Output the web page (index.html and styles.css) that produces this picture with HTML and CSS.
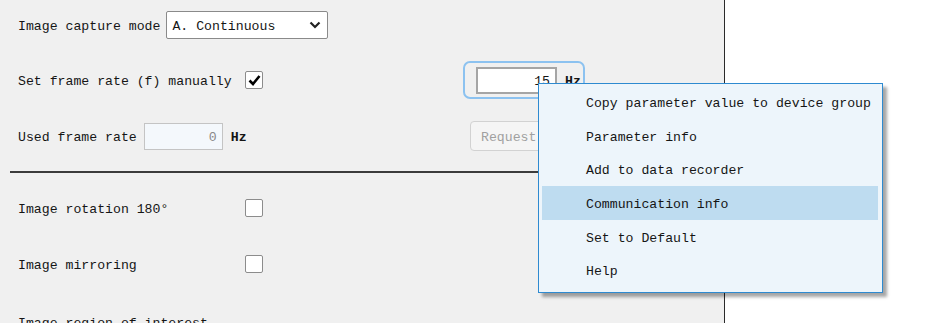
FILE: index.html
```html
<!DOCTYPE html>
<html lang="en">
<head>
<meta charset="UTF-8">
<title>Camera parameters</title>
<link rel="stylesheet" href="styles.css">
</head>
<body>
<div class="page">
  <div class="panel">
    <div class="row row-mode">
      <span class="label">Image capture mode</span>
      <div class="select">
        <span class="select-text">A. Continuous</span>
        <svg class="chevron" width="12" height="8" viewBox="0 0 12 8"><path d="M1.5 1.5 L6 6 L10.5 1.5" fill="none" stroke="#222" stroke-width="2.2"/></svg>
      </div>
    </div>

    <div class="row row-rate">
      <div class="left">
        <span class="label label-col">Set frame rate (f) manually</span>
        <span class="check checked">
          <svg width="15" height="15" viewBox="0 0 15 15"><path d="M2.5 7.5 L6 11 L12.5 3" fill="none" stroke="#000" stroke-width="2.6"/></svg>
        </span>
      </div>
      <div class="right">
        <div class="focus-box">
          <input class="num" type="text" value="15">
          <span class="unit">Hz</span>
        </div>
      </div>
    </div>

    <div class="row row-used">
      <div class="left">
        <span class="label">Used frame rate</span>
        <input class="num num-ro" type="text" value="0" readonly>
        <span class="unit">Hz</span>
      </div>
      <div class="right">
        <button class="btn" disabled>Request frame rate</button>
      </div>
    </div>

    <div class="divider"></div>

    <div class="row row-rot">
      <span class="label label-col">Image rotation 180°</span>
      <span class="check"></span>
    </div>

    <div class="row row-mirror">
      <span class="label label-col">Image mirroring</span>
      <span class="check"></span>
    </div>

    <div class="row row-roi">
      <span class="label">Image region of interest</span>
    </div>
  </div>

  <ul class="menu">
    <li>Copy parameter value to device group</li>
    <li>Parameter info</li>
    <li>Add to data recorder</li>
    <li class="active">Communication info</li>
    <li>Set to Default</li>
    <li>Help</li>
  </ul>
</div>
</body>
</html>
```
FILE: styles.css
```css
body {
    margin: 0;
    background: #fff;
    font-family: "Liberation Mono", "DejaVu Sans Mono", monospace;
    font-size: 13.2px;
    color: #151515;
    overflow: hidden;
}
.page {
    position: relative;
    height: 323px;
}
.panel {
    width: 724px;
    height: 323px;
    background: #f0f0f0;
    border-right: 1px solid #2a2a2a;
    overflow: hidden;
}
.row {
    display: flex;
    align-items: center;
    padding-left: 18px;
}
.row-mode { height: 50px; }
.row-rate { height: 60px; }
.row-used { height: 52px; }
.row-rot { height: 70px; }
.row-mirror { height: 42px; }
.row-roi { height: 74px; }

.left {
    display: flex;
    align-items: center;
    width: 445px;
}
.right {
    display: flex;
    align-items: center;
}
.label {
    padding-top: 2px;
    white-space: pre;
}
.label-col {
    width: 227px;
}

.select {
    display: flex;
    align-items: center;
    justify-content: space-between;
    box-sizing: border-box;
    width: 162px;
    height: 28px;
    margin-left: 6px;
    padding: 0 4px 0 5px;
    background: #fff;
    border: 1px solid #8a8a8a;
    border-radius: 2px;
}
.select-text {
    padding-top: 2px;
}
.chevron {
    margin-right: 2px;
}

.check {
    display: inline-flex;
    align-items: center;
    justify-content: center;
    box-sizing: border-box;
    width: 18px;
    height: 18px;
    background: #fff;
    border: 1px solid #8c8c8c;
    border-radius: 2px;
}

.focus-box {
    display: flex;
    align-items: center;
    box-sizing: border-box;
    width: 122px;
    height: 38px;
    padding-left: 11px;
    border: 2px solid #8cc2f0;
    border-radius: 7px;
}
.num {
    box-sizing: border-box;
    width: 81px;
    height: 27px;
    padding: 2px 5px 0;
    font: inherit;
    color: #151515;
    text-align: right;
    background: #fff;
    border: 2px solid #a5a5a5;
    outline: none;
}
.num-ro {
    width: 79px;
    margin-left: 7px;
    color: #8a8a8a;
    background: #f4f8fc;
    border: 1px solid #c4c4c4;
}
.unit {
    margin-left: 8px;
    padding-top: 2px;
    font-weight: bold;
}

.btn {
    box-sizing: border-box;
    width: 130px;
    height: 30px;
    margin-left: 7px;
    padding: 2px 10px 0;
    font: inherit;
    color: #a0a0a0;
    text-align: left;
    white-space: nowrap;
    overflow: hidden;
    background: #f5f5f5;
    border: 1px solid #d2d2d2;
    border-radius: 4px;
}

.divider {
    height: 2px;
    margin: 9px 0 0 10px;
    background: #3c3c3c;
}

.menu {
    position: absolute;
    left: 538px;
    top: 83px;
    box-sizing: border-box;
    width: 345px;
    height: 210px;
    margin: 0;
    padding: 1px 4px 4px 3px;
    list-style: none;
    background: #edf5fb;
    border: 1px solid #2e8ad0;
    box-shadow: 4px 4px 3px rgba(0, 0, 0, 0.35);
}
.menu li {
    box-sizing: border-box;
    height: 33.7px;
    line-height: 33.7px;
    padding: 2px 0 0 44px;
    white-space: nowrap;
}
.menu li.active {
    background: #bedcf0;
}
```
